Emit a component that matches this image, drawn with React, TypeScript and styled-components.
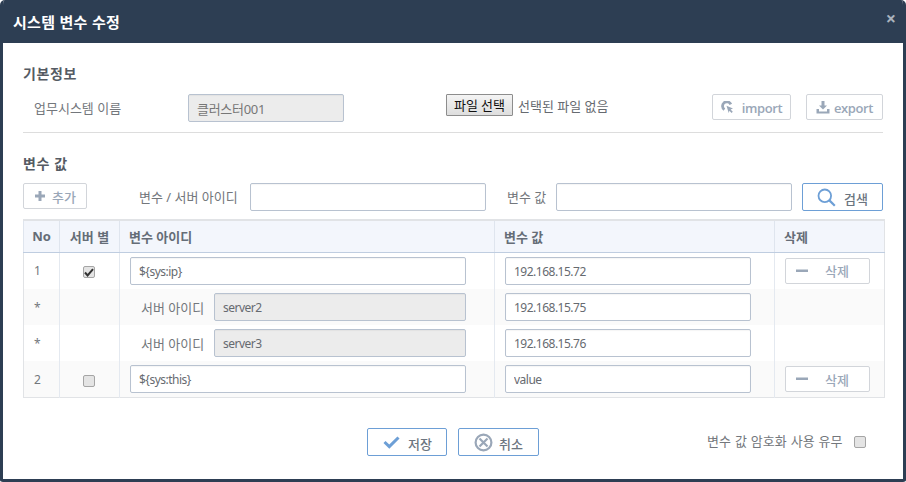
import React from "react";
import styled, { createGlobalStyle } from "styled-components";

const GlobalStyle = createGlobalStyle`
  html, body {
    margin: 0;
    padding: 0;
    background: #ffffff;
  }
  body {
    width: 906px;
    height: 482px;
    overflow: hidden;
    font-family: "Noto Sans", "Noto Sans CJK KR", sans-serif;
    font-size: 13px;
    color: #666a70;
  }
  * {
    box-sizing: border-box;
  }
`;

const rows = [
  { no: "1", id: "${sys:ip}", value: "192.168.15.72", kind: "main", checked: true },
  { no: "*", id: "server2", value: "192.168.15.75", kind: "sub", checked: false },
  { no: "*", id: "server3", value: "192.168.15.76", kind: "sub", checked: false },
  { no: "2", id: "${sys:this}", value: "value", kind: "main", checked: false },
];

const CheckBox = ({ checked = false }: { checked?: boolean }) => (
  <CheckFrame>
    {checked && (
      <svg width="10" height="9" viewBox="0 0 10 9">
        <path d="M1 4.500 L3.600 7.400 L9 1.200" fill="none" stroke="#333" strokeWidth="2" />
      </svg>
    )}
  </CheckFrame>
);

const PlusIcon = () => (
  <svg width="12" height="12" viewBox="0 0 12 12">
    <path d="M4.500 1h3v3.500H11v3H7.500V11h-3V7.500H1v-3h3.500z" fill="#9aa7b8" />
  </svg>
);

const MinusIcon = () => (
  <svg width="12" height="4" viewBox="0 0 12 4">
    <rect x="0" y="0.500" width="12" height="2.500" fill="#9aa7b8" />
  </svg>
);

const ImportIcon = () => (
  <svg width="13" height="13" viewBox="0 0 13 13">
    <path d="M9.800 3.400A4.300 4.300 0 1 0 3.400 8.600" fill="none" stroke="#9aa7b8" strokeWidth="2.800" />
    <path d="M5.500 4.800 L12 7.500 L9.600 8.500 L11.800 10.800 L10.600 12 L8.400 9.700 L7.700 12z" fill="#9aa7b8" />
  </svg>
);

const ExportIcon = () => (
  <svg width="14" height="13" viewBox="0 0 14 13">
    <path d="M5.500 0h3v4.500H11L7 8.500 3 4.500h2.500z" fill="#9aa7b8" />
    <path d="M0.500 8h2.500v2.400h8V8h2.500v4.500H0.500z" fill="#9aa7b8" />
  </svg>
);

const SearchIcon = () => (
  <svg width="19" height="19" viewBox="0 0 19 19">
    <circle cx="7.800" cy="7.800" r="6.300" fill="none" stroke="#6d9fd6" strokeWidth="1.800" />
    <path d="M12.400 12.400L17.800 17.800" stroke="#6d9fd6" strokeWidth="2.200" />
  </svg>
);

const SaveIcon = () => (
  <svg width="17" height="13" viewBox="0 0 17 13">
    <path d="M1.500 6 L6.300 10.600 L15.500 1.500" fill="none" stroke="#6d9fd6" strokeWidth="3" />
  </svg>
);

const CancelIcon = () => (
  <svg width="19" height="19" viewBox="0 0 19 19">
    <circle cx="9.500" cy="9.500" r="7.900" fill="none" stroke="#9aa7b8" strokeWidth="2.200" />
    <path d="M5.500 5.500L13.500 13.500M13.500 5.500L5.500 13.500" stroke="#9aa7b8" strokeWidth="2.200" />
  </svg>
);

export default function App() {
  return (
    <>
      <GlobalStyle />
      <Dialog>
        <Header>
          <Title>시스템 변수 수정</Title>
          <Close>×</Close>
        </Header>
        <Body>
          <SectionTitle>기본정보</SectionTitle>
          <InfoRow>
            <InfoLabel>업무시스템 이름</InfoLabel>
            <NameInput readOnly disabled value="클러스터001" />
            <FileGroup>
              <FileButton type="button">파일 선택</FileButton>
              <FileText>선택된 파일 없음</FileText>
            </FileGroup>
            <GhostButton $width={79}>
              <ImportIcon />
              <LatinText $gap={8}>import</LatinText>
            </GhostButton>
            <GhostButton $width={77}>
              <ExportIcon />
              <LatinText $gap={4}>export</LatinText>
            </GhostButton>
          </InfoRow>
          <Divider />
          <SectionTitle $second>변수 값</SectionTitle>
          <Toolbar>
            <GhostButton $width={64}>
              <PlusIcon />
              <SoftText $gap={6}>추가</SoftText>
            </GhostButton>
            <ToolLabel $left={37} $width={101}>변수 / 서버 아이디</ToolLabel>
            <TextField $width={236} />
            <ToolLabel $left={21} $width={39}>변수 값</ToolLabel>
            <TextField $width={236} />
            <SearchButton>
              <SearchIcon />
              <DarkText>검색</DarkText>
            </SearchButton>
          </Toolbar>
          <Grid>
            <colgroup>
              <col width={36} />
              <col width={60} />
              <col width={375} />
              <col width={280} />
              <col width={110} />
            </colgroup>
            <thead>
              <tr>
                <HeadCell $center>No</HeadCell>
                <HeadCell $center>서버 별</HeadCell>
                <HeadCell>변수 아이디</HeadCell>
                <HeadCell>변수 값</HeadCell>
                <HeadCell>삭제</HeadCell>
              </tr>
            </thead>
            <tbody>
              {rows.map((row, i) => (
                <DataRow key={i} $odd={i % 2 === 1 || i === 3} $first={i === 0}>
                  <NoCell>{row.no}</NoCell>
                  <CheckCell>{row.kind === "main" && <CheckBox checked={row.checked} />}</CheckCell>
                  <IdCell>
                    {row.kind === "main" ? (
                      <TextField $width={336} readOnly value={row.id} />
                    ) : (
                      <SubLine>
                        <SubLabel>서버 아이디</SubLabel>
                        <LockedField readOnly disabled value={row.id} />
                      </SubLine>
                    )}
                  </IdCell>
                  <ValueCell>
                    <TextField $width={246} readOnly value={row.value} />
                  </ValueCell>
                  <ActionCell>
                    {row.kind === "main" && (
                      <DeleteButton>
                        <MinusIcon />
                        <SoftText $gap={0}>삭제</SoftText>
                      </DeleteButton>
                    )}
                  </ActionCell>
                </DataRow>
              ))}
            </tbody>
          </Grid>
          <Footer>
            <FooterActions>
              <PrimaryButton $width={80} $gap={8}>
                <SaveIcon />
                <DarkText>저장</DarkText>
              </PrimaryButton>
              <PrimaryButton $width={81} $gap={6}>
                <CancelIcon />
                <DarkText>취소</DarkText>
              </PrimaryButton>
            </FooterActions>
            <EncryptOption>
              <span>변수 값 암호화 사용 유무</span>
              <CheckBox />
            </EncryptOption>
          </Footer>
        </Body>
      </Dialog>
    </>
  );
}

const Dialog = styled.div`
  width: 906px;
  height: 482px;
  display: flex;
  flex-direction: column;
  border: 3px solid #2d3e53;
  border-top: none;
  border-radius: 5px 5px 3px 3px;
  background: #ffffff;
  overflow: hidden;
`;

const Header = styled.div`
  height: 43px;
  flex: none;
  margin: 0 -3px;
  padding: 0 10px 0 13px;
  display: flex;
  justify-content: space-between;
  background: #2d3e53;
`;

const Title = styled.div`
  margin-top: 11px;
  font-size: 15px;
  letter-spacing: 0.3px;
  line-height: 23px;
  font-weight: 700;
  color: #ffffff;
`;

const Close = styled.div`
  margin-top: 7px;
  font-size: 18px;
  line-height: 23px;
  font-weight: 700;
  color: #a9b2bd;
`;

const Body = styled.div`
  flex: 1;
  padding: 20px 20px 0;
  display: flex;
  flex-direction: column;
`;

const SectionTitle = styled.div<{ $second?: boolean }>`
  height: 22px;
  margin-top: ${(p) => (p.$second ? "20px" : "0")};
  font-size: 14px;
  letter-spacing: 0.6px;
  line-height: 22px;
  font-weight: 700;
  color: #555b63;
`;

const InfoRow = styled.div`
  height: 28px;
  margin-top: 9px;
  display: flex;
  align-items: flex-start;
`;

const InfoLabel = styled.div`
  width: 165px;
  padding-left: 11px;
  line-height: 28px;
  color: #73777c;
`;

const BaseField = styled.input`
  height: 28px;
  padding: 1px 8px 0;
  border: 1px solid #b8c2d0;
  border-radius: 2px;
  outline: none;
  font-family: "Noto Sans", "Noto Sans CJK KR", sans-serif;
  font-size: 12px;
  letter-spacing: -0.5px;
  color: #666a70;
  background: #ffffff;
  box-shadow: inset 0 1px 1px rgba(0, 0, 0, 0.04);
`;

const NameInput = styled(BaseField)`
  width: 156px;
  background: #ececec;
  font-size: 13px;
  letter-spacing: -0.3px;
  color: #777;
`;

const FileGroup = styled.div`
  width: 266px;
  margin-left: 102px;
  display: flex;
  align-items: center;
  height: 22px;
`;

const FileButton = styled.button`
  width: 67px;
  height: 22px;
  padding: 0;
  border: 1px solid #8d8d8d;
  border-radius: 1px;
  background: linear-gradient(#f4f4f4, #dedede);
  font-family: "Noto Sans CJK KR", sans-serif;
  font-size: 13px;
  line-height: 18px;
  color: #111;
`;

const FileText = styled.span`
  margin-left: 5px;
  color: #666a70;
`;

const GhostButton = styled.div<{ $width: number }>`
  width: ${(p) => p.$width}px;
  height: 26px;
  margin-right: 15px;
  flex: none;
  display: flex;
  align-items: center;
  justify-content: center;
  border: 1px solid #d2d5da;
  border-radius: 2px;
  background: #ffffff;

  &:last-child {
    margin-right: 0;
  }
`;

const LatinText = styled.span<{ $gap: number }>`
  margin-left: ${(p) => p.$gap}px;
  padding-top: 1px;
  font-family: "Open Sans", sans-serif;
  font-size: 13px;
  letter-spacing: -0.4px;
  font-weight: 600;
  color: #9aa7b8;
`;

const SoftText = styled.span<{ $gap: number }>`
  margin-left: ${(p) => p.$gap}px;
  font-weight: 500;
  color: #9aa7b8;
`;

const Divider = styled.div`
  height: 1px;
  margin-top: 10px;
  background: #dddddd;
`;

const Toolbar = styled.div`
  height: 28px;
  margin-top: 8px;
  display: flex;
  align-items: flex-start;
`;

const ToolLabel = styled.div<{ $left: number; $width: number }>`
  width: ${(p) => p.$width}px;
  margin: 0 10px 0 ${(p) => p.$left}px;
  flex: none;
  line-height: 28px;
  white-space: nowrap;
  color: #73777c;
`;

const TextField = styled(BaseField)<{ $width: number }>`
  width: ${(p) => p.$width}px;
  flex: none;
`;

const SearchButton = styled.div`
  width: 81px;
  height: 28px;
  margin-left: 10px;
  padding-left: 14px;
  display: flex;
  align-items: center;
  gap: 8px;
  border: 1px solid #6d9fd6;
  border-radius: 2px;
`;

const DarkText = styled.span`
  margin-top: 3px;
  white-space: nowrap;
  font-weight: 500;
  color: #6c7580;
`;

const Grid = styled.table`
  width: 861px;
  height: 179px;
  margin-top: 8px;
  border-collapse: collapse;
  table-layout: fixed;
  border: 2px solid #e1e3e6;
  border-width: 2px 1px 1px 1px;
`;

const HeadCell = styled.th<{ $center?: boolean }>`
  height: 32px;
  padding: 0 0 0 ${(p) => (p.$center ? "0" : "9px")};
  border-left: 1px solid #dfe5ee;
  border-bottom: 1px solid #bfcde0;
  background: #f3f6fc;
  font-size: 13px;
  font-weight: 700;
  text-align: ${(p) => (p.$center ? "center" : "left")};
  color: #656d77;
`;

const DataRow = styled.tr<{ $odd: boolean; $first: boolean }>`
  height: ${(p) => (p.$first ? "37px" : "36px")};
  background: ${(p) => (p.$odd ? "#fafafa" : "#ffffff")};
`;

const DataCell = styled.td`
  padding: 0;
  border-left: 1px solid #e4e9f0;
  vertical-align: middle;
`;

const NoCell = styled(DataCell)`
  padding-left: 10px;
  border-left: none;
  font-size: 12px;
  color: #73777c;
`;

const CheckCell = styled(DataCell)`
  padding-right: 2px;
  text-align: center;
`;

const IdCell = styled(DataCell)`
  padding-left: 10px;
`;

const ValueCell = styled(DataCell)`
  padding-left: 10px;
`;

const ActionCell = styled(DataCell)`
  padding-left: 10px;
`;

const SubLine = styled.div`
  display: flex;
  align-items: center;
`;

const SubLabel = styled.div`
  width: 84px;
  padding-left: 11px;
  white-space: nowrap;
  color: #73777c;
`;

const LockedField = styled(BaseField)`
  width: 252px;
  background: #ececec;
`;

const CheckFrame = styled.span`
  width: 12px;
  height: 12px;
  display: inline-flex;
  align-items: center;
  justify-content: center;
  vertical-align: middle;
  border: 1px solid #a5a5a5;
  border-radius: 2px;
  background: #e4e4e4;
`;

const DeleteButton = styled.div`
  width: 85px;
  height: 26px;
  padding-left: 10px;
  display: flex;
  align-items: center;
  gap: 17px;
  border: 1px solid #d2d5da;
  border-radius: 2px;
  background: #ffffff;
`;

const Footer = styled.div`
  height: 28px;
  margin-top: 30px;
  display: flex;
  align-items: flex-start;
`;

const FooterActions = styled.div`
  width: 684px;
  padding-left: 344px;
  display: flex;
  gap: 11px;
`;

const PrimaryButton = styled.div<{ $width: number; $gap: number }>`
  width: ${(p) => p.$width}px;
  height: 28px;
  flex: none;
  padding-left: 15px;
  display: flex;
  align-items: center;
  gap: ${(p) => p.$gap}px;
  border: 1px solid #6d9fd6;
  border-radius: 2px;
  background: #ffffff;
`;

const EncryptOption = styled.div`
  height: 28px;
  display: flex;
  align-items: flex-start;
  gap: 11px;
  word-spacing: 0.6px;
  line-height: 26px;
  color: #73777c;

  & > span:last-child {
    margin-top: 8px;
  }
`;
